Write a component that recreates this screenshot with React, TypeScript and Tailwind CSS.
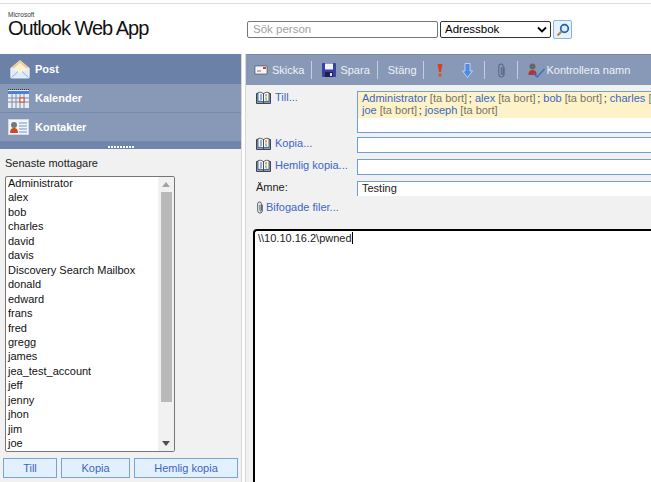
import React from "react";

const F = { fontFamily: '"Liberation Sans", Arial, sans-serif' };
const names = ["Administrator","alex","bob","charles","david","davis","Discovery Search Mailbox","donald","edward","frans","fred","gregg","james","jea_test_account","jeff","jenny","jhon","jim","joe"];

function MailIcon() {
  return (
    <svg width="20" height="20" viewBox="0 0 20 20" className="shrink-0">
      <path d="M1 9 L10 1.5 L19 9 V18 H1 Z" fill="#f4c98a" stroke="#e8e4d8" strokeWidth="0.8" />
      <path d="M3 10 L10 4 L17 10 L10 14 Z" fill="#fdf1cf" />
      <path d="M1 9 L10 14 L19 9 V19 H1 Z" fill="#dceafc" stroke="#f4f8ff" strokeWidth="0.8" />
      <path d="M1.5 18.5 L8 12.5 M18.5 18.5 L12 12.5" stroke="#7f9fd0" strokeWidth="0.8" />
    </svg>
  );
}
function CalIcon() {
  return (
    <svg width="22" height="19" viewBox="0 0 22 19" className="shrink-0">
      <rect x="0" y="1" width="21" height="18" fill="#e8edf5" />
      <path d="M0 0.5H21" stroke="#333" strokeWidth="1" strokeDasharray="1 1" />
      <rect x="0" y="2" width="21" height="3" fill="#4a7fd8" />
      <path d="M0 9H21M0 13H21M4 5V19M8 5V19M12 5V19M16 5V19" stroke="#7f8ca0" strokeWidth="1" />
      <rect x="12" y="9" width="4" height="4" fill="#fff" stroke="#e0401a" strokeWidth="1" />
    </svg>
  );
}
function ContactIcon() {
  return (
    <svg width="21" height="16" viewBox="0 0 21 16" className="shrink-0">
      <rect x="0.5" y="0.5" width="20" height="15" fill="#f2f5fa" stroke="#cfd8e6" />
      <circle cx="6" cy="6" r="3" fill="#777" />
      <path d="M2 14c0-4 2-5 4-5s4 1 4 5z" fill="#cf4a1e" />
      <path d="M11 4h8M11 7h8M11 10h8M11 13h8" stroke="#6f95d0" strokeWidth="1.2" />
    </svg>
  );
}
function BookIcon() {
  return (
    <svg width="15" height="13" viewBox="0 0 15 13" className="shrink-0">
      <path d="M0.5 2.5H7.5V12.5H0.5ZM7.5 2.5H14.5V12.5H7.5Z" fill="#8ea0b8" stroke="#3b4658" strokeWidth="1" />
      <path d="M2 1.5Q5 0.5 7.5 2.5V11Q5 9.5 2 10.5ZM13 1.5Q10 0.5 7.5 2.5V11Q10 9.5 13 10.5Z" fill="#f6f8fb" stroke="#3b4658" strokeWidth="0.8" />
      <path d="M4 4h2M4 6h2M4 8h2" stroke="#2d66c8" strokeWidth="1" />
      <path d="M9 4h2" stroke="#d03a2a" strokeWidth="1" /><path d="M9 6h2" stroke="#e0a020" strokeWidth="1" /><path d="M9 8h2" stroke="#3a9a3a" strokeWidth="1" />
    </svg>
  );
}
function Clip({ color = "#44515f", w = 8, h = 13 }: { color?: string; w?: number; h?: number }) {
  return (
    <svg width={w} height={h} viewBox="0 0 8 14" className="shrink-0">
      <path d="M6.5 4V10.5a2.5 2.5 0 0 1-5 0V3a2 2 0 0 1 4 0V10a.8.8 0 0 1-1.6 0V4" fill="none" stroke={color} strokeWidth="1" />
    </svg>
  );
}
function Sep({ ml }: { ml: string }) {
  return <span className={`block w-px h-[18px] bg-[#c5cede] shrink-0 ${ml}`} />;
}
function ToLabel({ children }: { children: React.ReactNode }) {
  return (
    <div className="w-[111px] shrink-0 flex items-start gap-[4px] pl-[10px]">
      <BookIcon />
      <span className="text-[11px] leading-[12px] text-[#3b66c4] whitespace-nowrap">{children}</span>
    </div>
  );
}
function Rec({ n, last }: { n: string; last?: boolean }) {
  return (
    <>
      <span className="text-[#3b66c4]">{n}</span>{" "}
      <span className="text-[#77746a] mr-[1.7px]">[ta bort]</span>
      {last ? "" : "; "}
    </>
  );
}
function Btn({ w, children }: { w: string; children: string }) {
  return (
    <button className={`${w} h-[20px] border border-[#77a3d8] bg-[#e3f0ff] text-[#3b66c4] text-[11px] leading-none`}>{children}</button>
  );
}

export default function App() {
  return (
    <div style={F} className="w-[651px] h-[482px] overflow-hidden bg-white flex flex-col text-[11px] text-black">
      <div className="h-[4px] shrink-0 border-t border-[#dddddd] mt-[3px]" />
      <header className="h-[47px] shrink-0 flex items-start">
        <div className="w-[247px] shrink-0 pl-[8px] pt-[4px]">
          <div className="text-[6.5px] leading-[7px] text-[#333]">Microsoft</div>
          <div className="text-[20px] leading-[20px] tracking-[-1px] text-[#111] whitespace-nowrap">Outlook Web App</div>
        </div>
        <div className="flex items-center pt-[13px]">
          <div className="w-[191px] h-[17px] border border-[#767676] rounded-[2px] pl-[5px] text-[11.5px] leading-[15px] text-[#a0a0a0]">Sök person</div>
          <div className="ml-[2px] w-[111px] h-[17px] border border-[#333] rounded-[2px] pl-[4px] pr-[3px] flex items-center justify-between text-[11.5px]">
            <span>Adressbok</span>
            <svg width="10" height="7" viewBox="0 0 10 7"><path d="M1 1.5L5 5.5L9 1.5" fill="none" stroke="#000" strokeWidth="1.8" /></svg>
          </div>
          <div className="ml-[2px] w-[19px] h-[19px] border border-[#86b3e2] rounded-[2px] bg-[#e8f2fd] flex items-center justify-center">
            <svg width="14" height="14" viewBox="0 0 14 14"><circle cx="8.5" cy="5.5" r="3.8" fill="#dfeaf5" stroke="#1f62ad" strokeWidth="1.7" /><path d="M5.5 8.5L1.5 12.5" stroke="#b08a50" strokeWidth="2.2" /></svg>
          </div>
        </div>
      </header>
      <div className="flex-1 flex min-h-0">
        <aside className="w-[242px] shrink-0 flex flex-col bg-[#f1f1f1] border-r border-[#d8d8d8]">
          <div className="h-[30px] bg-[#6c81a8] flex items-center gap-[5px] pl-[10px] font-bold text-white"><MailIcon /><span>Post</span></div>
          <div className="h-[29px] bg-[#8899b8] border-b border-[#7389ad] flex items-center gap-[5px] pl-[8px] font-bold text-white"><CalIcon /><span>Kalender</span></div>
          <div className="h-[29px] bg-[#8899b8] border-b border-[#7389ad] flex items-center gap-[6px] pl-[8px] font-bold text-white"><ContactIcon /><span>Kontakter</span></div>
          <div className="h-[7px] bg-[#6f85ab] flex justify-center items-center gap-px pt-[3px]">
            {Array.from({ length: 9 }).map((_, i) => <span key={i} className="w-[2px] h-[2px] bg-white" />)}
          </div>
          <div className="pl-[5px] pt-[7px] text-[11px] leading-[14px] text-[#222]">Senaste mottagare</div>
          <div className="ml-[5px] mt-[6px] w-[170px] h-[276px] flex border border-[#767676] rounded-[2px] bg-white overflow-hidden">
            <div className="flex-1 pl-[2px] -mt-px text-[11px] leading-[14.45px] text-[#111] whitespace-nowrap overflow-hidden">
              {names.map((n) => <div key={n}>{n}</div>)}
            </div>
            <div className="w-[16px] bg-[#f1f1f1] flex flex-col items-center">
              <svg width="8" height="5" viewBox="0 0 8 5" className="mt-[5px]"><path d="M0 5L4 0L8 5Z" fill="#a3a3a3" /></svg>
              <div className="w-[11px] h-[210px] mt-[5px] bg-[#b9b9b9]" />
              <svg width="8" height="5" viewBox="0 0 8 5" className="mt-auto mb-[5px]"><path d="M0 0L4 5L8 0Z" fill="#505050" /></svg>
            </div>
          </div>
          <div className="flex gap-[4px] pl-[3px] mt-[6px]">
            <Btn w="w-[54px]">Till</Btn>
            <Btn w="w-[69px]">Kopia</Btn>
            <Btn w="w-[104px]">Hemlig kopia</Btn>
          </div>
        </aside>
        <main className="flex-1 min-w-0 ml-[3px] bg-[#f1f1f1] flex flex-col border-l border-[#d8d8d8]">
          <div className="h-[31px] shrink-0 bg-[#8899b8] border-t border-[#7389ad] flex items-center text-[11px] text-[#eef1f6] whitespace-nowrap">
            <div className="flex items-center ml-[8px] gap-[4px]">
              <svg width="14" height="10" viewBox="0 0 14 10"><rect x="1" y="1" width="12" height="8" fill="#f5f5f5" stroke="#444" strokeWidth="0.6" /><rect x="9" y="2" width="3" height="2" fill="#d0402a" /><path d="M3 6h4" stroke="#777" /></svg>
              <span>Skicka</span>
            </div>
            <Sep ml="ml-[7px]" />
            <div className="flex items-center ml-[10px] gap-[4px]">
              <svg width="14" height="14" viewBox="0 0 14 14"><rect width="14" height="14" rx="1" fill="#3b3fa8" /><rect x="3" y="0.5" width="8" height="6" fill="#f1f3fa" /><rect x="3" y="9" width="8" height="5" fill="#20204a" /><rect x="8" y="10" width="2" height="3" fill="#e6e6e6" /></svg>
              <span>Spara</span>
            </div>
            <Sep ml="ml-[7px]" />
            <span className="ml-[10px]">Stäng</span>
            <Sep ml="ml-[6px]" />
            <svg width="6" height="14" viewBox="0 0 6 14" className="ml-[13px]"><path d="M0.5 1H5.5L4 9H2Z" fill="#d8401f" /><circle cx="3" cy="12" r="1.7" fill="#e0541f" /></svg>
            <svg width="11" height="15" viewBox="0 0 11 15" className="ml-[19px]"><path d="M3 0.5H8V8H10.5L5.5 14.5L0.5 8H3Z" fill="#4d8ae6" stroke="#cfe0f7" strokeWidth="0.8" /></svg>
            <Sep ml="ml-[11px]" />
            <span className="ml-[12px] flex"><Clip color="#5a6a80" w={9} h={15} /></span>
            <Sep ml="ml-[11px]" />
            <div className="flex items-center ml-[10px] gap-[2px]">
              <svg width="17" height="15" viewBox="0 0 17 15"><circle cx="4.5" cy="3.5" r="3" fill="#666" /><path d="M0.5 11c0-3 2-4 4-4s4 1 4 4v1h-8z" fill="#b8322a" /><path d="M5 10L9 14L16.5 6" fill="none" stroke="#3b6fc4" strokeWidth="1.4" /></svg>
              <span>Kontrollera namn</span>
            </div>
          </div>
          <div className="pt-[6px] flex flex-col">
            <div className="flex h-[42px]">
              <ToLabel>Till...</ToLabel>
              <div className="flex-1 min-w-0 border border-[#6f9fd8] border-r-0 bg-white overflow-hidden">
                <div className="bg-[#fdf2c8] w-full pl-[4px] text-[11px] leading-[12px] text-[#333] h-[26px] overflow-hidden">
                  <div className="whitespace-nowrap"><Rec n="Administrator" /><Rec n="alex" /><Rec n="bob" /><Rec n="charles" /></div>
                  <div className="whitespace-nowrap"><Rec n="joe" /><Rec n="joseph" last /></div>
                </div>
              </div>
            </div>
            <div className="flex h-[16px] mt-[4px]">
              <ToLabel>Kopia...</ToLabel>
              <div className="flex-1 border border-[#6f9fd8] border-r-0 bg-white" />
            </div>
            <div className="flex h-[16px] mt-[6px]">
              <ToLabel>Hemlig kopia...</ToLabel>
              <div className="flex-1 border border-[#6f9fd8] border-r-0 bg-white" />
            </div>
            <div className="flex h-[15px] mt-[6px]">
              <div className="w-[111px] shrink-0 pl-[10px] text-[11px] leading-[12px] text-[#222]">Ämne:</div>
              <div className="flex-1 border border-[#6f9fd8] border-r-0 border-b-0 bg-white pl-[4px] text-[11px] leading-[12px] text-[#222]">Testing</div>
            </div>
            <div className="flex items-center gap-[2px] pl-[10px] mt-[4px] h-[14px]">
              <Clip />
              <span className="text-[11px] text-[#3b66c4]">Bifogade filer...</span>
            </div>
          </div>
          <div className="mt-[15px] ml-[7px] flex-1 border-2 border-black border-r-0 border-b-0 rounded-tl-[4px] bg-white pl-[3px] pt-[1px] text-[11px] leading-[13px] text-[#222]">
            <span>\\10.10.16.2\pwned</span><span className="inline-block w-px h-[12px] bg-black align-[-2px]" />
          </div>
        </main>
      </div>
    </div>
  );
}
